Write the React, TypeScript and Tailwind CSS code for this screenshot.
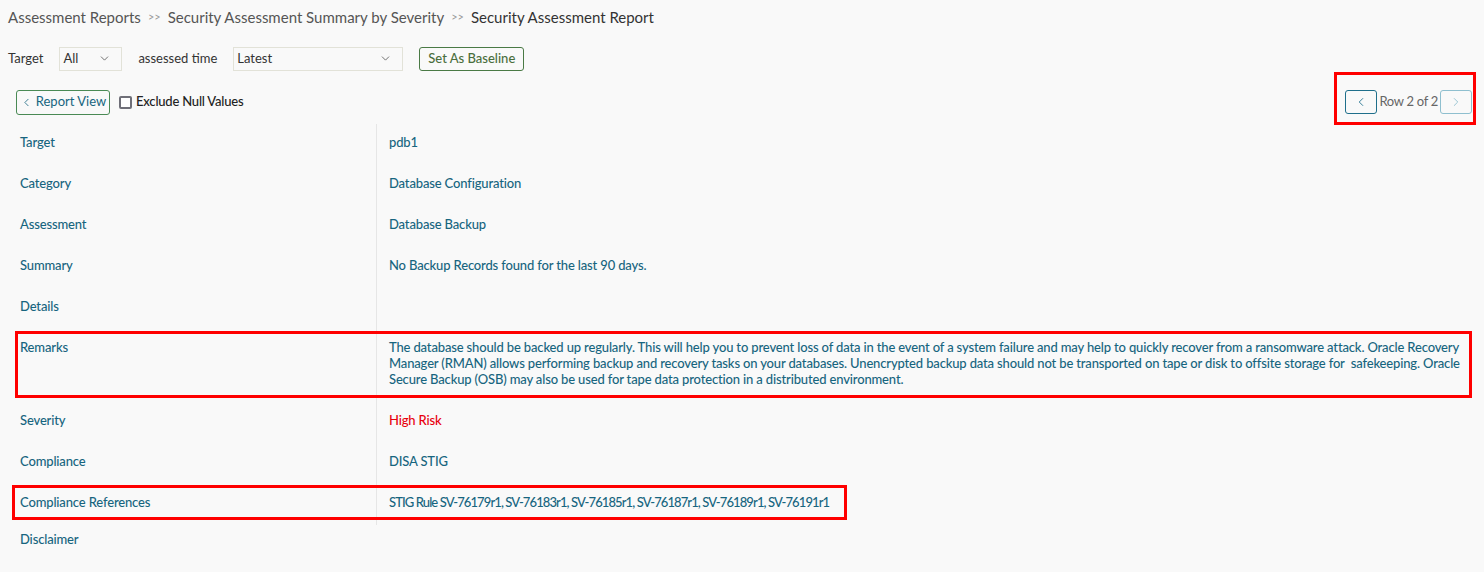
import { ChevronDown, ChevronLeft, ChevronRight } from 'lucide-react';

type Row = { label: string; value?: string; tone?: 'risk' | 'refs' };

const rows: Row[] = [
  { label: 'Target', value: 'pdb1' },
  { label: 'Category', value: 'Database Configuration' },
  { label: 'Assessment', value: 'Database Backup' },
  { label: 'Summary', value: 'No Backup Records found for the last 90 days.' },
  { label: 'Details', value: '' },
  {
    label: 'Remarks',
    value:
      'The database should be backed up regularly. This will help you to prevent loss of data in the event of a system failure and may help to quickly recover from a ransomware attack. Oracle Recovery Manager (RMAN) allows performing backup and recovery tasks on your databases. Unencrypted backup data should not be transported on tape or disk to offsite storage for \u00a0safekeeping. Oracle Secure Backup (OSB) may also be used for tape data protection in a distributed environment.',
  },
  { label: 'Severity', value: 'High Risk', tone: 'risk' },
  { label: 'Compliance', value: 'DISA STIG' },
  {
    label: 'Compliance References',
    value: 'STIG Rule SV-76179r1, SV-76183r1, SV-76185r1, SV-76187r1, SV-76189r1, SV-76191r1',
    tone: 'refs',
  },
];

export default function App() {
  return (
    <div
      className="relative min-h-[572px] w-full bg-[#f9f9f9] text-[13px] text-[#333]"
      style={{ fontFamily: 'Lato, "Noto Sans", sans-serif' }}
    >
      {/* Breadcrumb */}
      <div className="flex items-center h-[34px] px-2 text-[15px]">
        <span className="text-[#555]">Assessment Reports</span>
        <span className="mx-[7px] text-[11px] text-[#999]">&gt;&gt;</span>
        <span className="text-[#555]">Security Assessment Summary by Severity</span>
        <span className="mx-[7px] text-[11px] text-[#999]">&gt;&gt;</span>
        <span className="text-[#333]">Security Assessment Report</span>
      </div>

      {/* Filters */}
      <div className="flex items-center h-[48px] px-2 pt-[1px]">
        <span className="mr-4 text-[#333]">Target</span>
        <div className="flex items-center justify-between w-[63px] h-[24px] border border-[#e2e2d8] bg-[#f9f9f9] pl-[3px] pr-[10px]">
          <span>All</span>
          <ChevronDown className="w-[13px] h-[13px] text-[#555]" strokeWidth={1.5} />
        </div>
        <span className="ml-4 mr-4 text-[#333]">assessed time</span>
        <div className="flex items-center justify-between w-[170px] h-[24px] border border-[#e2e2d8] bg-[#f9f9f9] pl-[3px] pr-[10px]">
          <span>Latest</span>
          <ChevronDown className="w-[13px] h-[13px] text-[#555]" strokeWidth={1.5} />
        </div>
        <button className="ml-4 h-[24px] px-2 rounded-[3px] border border-[#4a7a45] text-[#4a6e3c] font-medium">
          Set As Baseline
        </button>
      </div>

      {/* Toolbar */}
      <div className="flex items-center justify-between h-[40px] pl-4 pr-3 mb-[2px]">
        <div className="flex items-center">
          <button className="flex items-center gap-[3px] h-[25px] w-[94px] justify-center rounded-[3px] border border-[#4a8a55] text-[#17657f]">
            <ChevronLeft className="w-[13px] h-[13px]" strokeWidth={1.5} />
            Report View
          </button>
          <span className="ml-[9px] mr-[4px] w-[13px] h-[13px] rounded-[2px] border-2 border-[#6f6f78] bg-white" />
          <span className="font-medium text-[#222] tracking-[-0.2px]">Exclude Null Values</span>
        </div>
        <div className="flex items-center gap-[2px]">
          <button className="flex items-center justify-center w-[32px] h-[24px] rounded-[3px] border border-[#1f6f8b] text-[#1f6f8b]">
            <ChevronLeft className="w-[14px] h-[14px]" strokeWidth={1.5} />
          </button>
          <span className="text-[#666] tracking-[-0.3px]">Row 2 of 2</span>
          <button className="flex items-center justify-center w-[32px] h-[24px] rounded-[3px] border border-[#8fbfcf] text-[#8fbfcf]">
            <ChevronRight className="w-[14px] h-[14px]" strokeWidth={1.5} />
          </button>
        </div>
      </div>

      {/* Detail table */}
      <div className="ml-4 grid grid-cols-[360px_1fr] font-medium text-[#17657f] leading-4 tracking-[-0.15px]">
        {rows.map((r) => (
          <div key={r.label} className="contents">
            <div className="pl-1 pt-[10px] pb-[15px]">{r.label}</div>
            <div
              className={`border-l border-[#e6e6e6] pl-[12px] pr-[20px] pt-[10px] pb-[15px] ${
                r.tone === 'risk' ? 'text-[#e8000d]' : ''
              } ${r.tone === 'refs' ? 'tracking-[-0.9px]' : ''}`}
            >
              {r.value || '\u00a0'}
            </div>
          </div>
        ))}
        <div className="pl-1 pt-[6px]">Disclaimer</div>
        <div />
      </div>

      {/* Annotation boxes */}
      <div className="pointer-events-none absolute left-[1334px] top-[72px] w-[142px] h-[53px] border-[3px] border-[#f00]" />
      <div className="pointer-events-none absolute left-[15px] top-[331px] w-[1457px] h-[67px] border-[3px] border-[#f00]" />
      <div className="pointer-events-none absolute left-[12px] top-[485px] w-[835px] h-[35px] border-[3px] border-[#f00]" />
    </div>
  );
}
